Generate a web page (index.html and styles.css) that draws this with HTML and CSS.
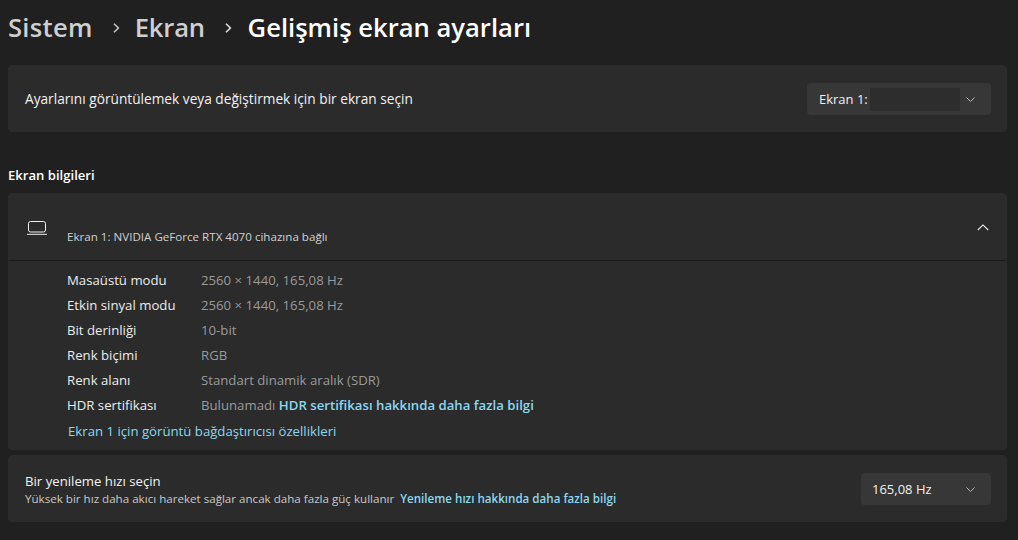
FILE: index.html
```html
<!DOCTYPE html>
<html lang="tr">
<head>
<meta charset="utf-8">
<title>Gelişmiş ekran ayarları</title>
<link rel="stylesheet" href="styles.css">
</head>
<body>
<main class="page">
  <nav class="crumbs">
    <span class="crumb crumb-root">Sistem</span>
    <svg class="sep" width="7" height="10" viewBox="0 0 7 10"><path d="M1 .8 5.4 5 1 9.2" fill="none" stroke="#c8c8c8" stroke-width="1.5"/></svg>
    <span class="crumb crumb-mid">Ekran</span>
    <svg class="sep" width="7" height="10" viewBox="0 0 7 10"><path d="M1 .8 5.4 5 1 9.2" fill="none" stroke="#e4e4e4" stroke-width="1.5"/></svg>
    <span class="crumb current">Gelişmiş ekran ayarları</span>
  </nav>

  <section class="card picker">
    <span class="label wide">Ayarlarını görüntülemek veya değiştirmek için bir ekran seçin</span>
    <div class="select select-screen">
      <span>Ekran 1:</span>
      <span class="redacted"></span>
      <svg class="chev" width="9" height="5" viewBox="0 0 9 5"><path d="M.5.5 4.5 4.5 8.5.5" fill="none" stroke="#b8b8b8" stroke-width="1"/></svg>
    </div>
  </section>

  <h2 class="section-title">Ekran bilgileri</h2>

  <section class="card info">
    <header class="info-head">
      <svg class="laptop" width="20" height="14" viewBox="0 0 20 14"><rect x="1.5" y=".5" width="17" height="10.5" rx="2" fill="none" stroke="#f2f2f2" stroke-width="1"/><path d="M0 13.3h20" stroke="#f2f2f2" stroke-width="1"/></svg>
      <span class="info-name">Ekran 1: NVIDIA GeForce RTX 4070 cihazına bağlı</span>
      <svg class="up" width="12" height="7" viewBox="0 0 12 7"><path d="M.8 6 6 .9 11.2 6" fill="none" stroke="#f0f0f0" stroke-width="1.1"/></svg>
    </header>
    <dl class="rows">
      <div class="row"><dt>Masaüstü modu</dt><dd>2560 × 1440, 165,08 Hz</dd></div>
      <div class="row"><dt>Etkin sinyal modu</dt><dd>2560 × 1440, 165,08 Hz</dd></div>
      <div class="row"><dt>Bit derinliği</dt><dd>10-bit</dd></div>
      <div class="row"><dt>Renk biçimi</dt><dd>RGB</dd></div>
      <div class="row"><dt>Renk alanı</dt><dd>Standart dinamik aralık (SDR)</dd></div>
      <div class="row"><dt>HDR sertifikası</dt><dd>Bulunamadı <a class="link strong">HDR sertifikası hakkında daha fazla bilgi</a></dd></div>
    </dl>
    <a class="link adapter">Ekran 1 için görüntü bağdaştırıcısı özellikleri</a>
  </section>

  <section class="card rate">
    <div class="rate-text">
      <span class="label">Bir yenileme hızı seçin</span>
      <span class="sub">Yüksek bir hız daha akıcı hareket sağlar ancak daha fazla güç kullanır <a class="link strong sub-link">Yenileme hızı hakkında daha fazla bilgi</a></span>
    </div>
    <div class="select select-rate">
      <span>165,08 Hz</span>
      <svg class="chev" width="9" height="5" viewBox="0 0 9 5"><path d="M.5.5 4.5 4.5 8.5.5" fill="none" stroke="#b8b8b8" stroke-width="1"/></svg>
    </div>
  </section>
</main>
</body>
</html>
```
FILE: styles.css
```css
* { box-sizing: border-box; }
html, body { margin: 0; height: 100%; }
body {
  background: #202020;
  color: #f2f2f2;
  font-family: "Open Sans", "Noto Sans", sans-serif;
  font-size: 13.2px;
  overflow: hidden;
}
.page {
  width: 1018px;
  height: 540px;
  padding: 0 11px 0 8px;
  display: flex;
  flex-direction: column;
}
.crumbs {
  height: 54px;
  flex: none;
  display: flex;
  align-items: center;
  font-size: 25.6px;
  font-weight: 600;
  color: #cfcfcf;
  white-space: nowrap;
}
.crumb-root { letter-spacing: .3px; }
.crumb-mid { letter-spacing: -.2px; }
.sep { margin: 1px 15px 0 20px; }
.current { color: #fff; margin-left: .7px; }
.card {
  background: #2b2b2b;
  border: 1px solid #2b2b2b;
  border-radius: 4px;
  flex: none;
}
.picker {
  margin-top: 11px;
  height: 67px;
  padding: 0 15px 0 16px;
  display: flex;
  align-items: center;
  justify-content: space-between;
}
.label { color: #f2f2f2; }
.wide { font-size: 13.7px; }
.select {
  height: 32px;
  margin-top: 1px;
  background: #373737;
  border-radius: 4px;
  display: flex;
  align-items: center;
  color: #f0f0f0;
  font-size: 13px;
}
.select-screen { width: 184px; padding: 0 16px 0 12px; }
.redacted { width: 90px; height: 23px; background: #2d2d2d; margin-left: 2px; margin-right: auto; }
.select-rate { width: 130px; padding: 0 16px 0 11px; justify-content: space-between; }
.section-title {
  margin: 34px 0 9px;
  font-size: 13.1px;
  line-height: 18px;
  font-weight: 600;
  color: #fff;
}
.info { height: 257px; }
.info-head {
  height: 67px;
  border-bottom: 1px solid #1c1c1c;
  position: relative;
}
.laptop { position: absolute; left: 18px; top: 27px; }
.info-name { position: absolute; left: 58px; top: 35px; font-size: 11.6px; color: #d0d0d0; }
.up { position: absolute; right: 17px; top: 30px; }
.rows { margin: 6px 0 0 58px; }
.row { display: flex; height: 25px; align-items: center; }
dt { width: 134px; color: #ececec; }
dd { margin: 0; color: #9a9a9a; }
.link { color: #8ad8ef; }
.strong { font-weight: 600; }
.adapter { display: block; margin: 5px 0 0 59px; }
.rate {
  margin-top: 5px;
  height: 67px;
  padding: 0 15px 0 16px;
  display: flex;
  align-items: center;
  justify-content: space-between;
}
.rate-text { display: flex; flex-direction: column; gap: 1px; margin-top: 2px; }
.sub { font-size: 11.6px; color: #c8c8c8; line-height: 16px; }
.sub-link { margin-left: 3px; }
```
